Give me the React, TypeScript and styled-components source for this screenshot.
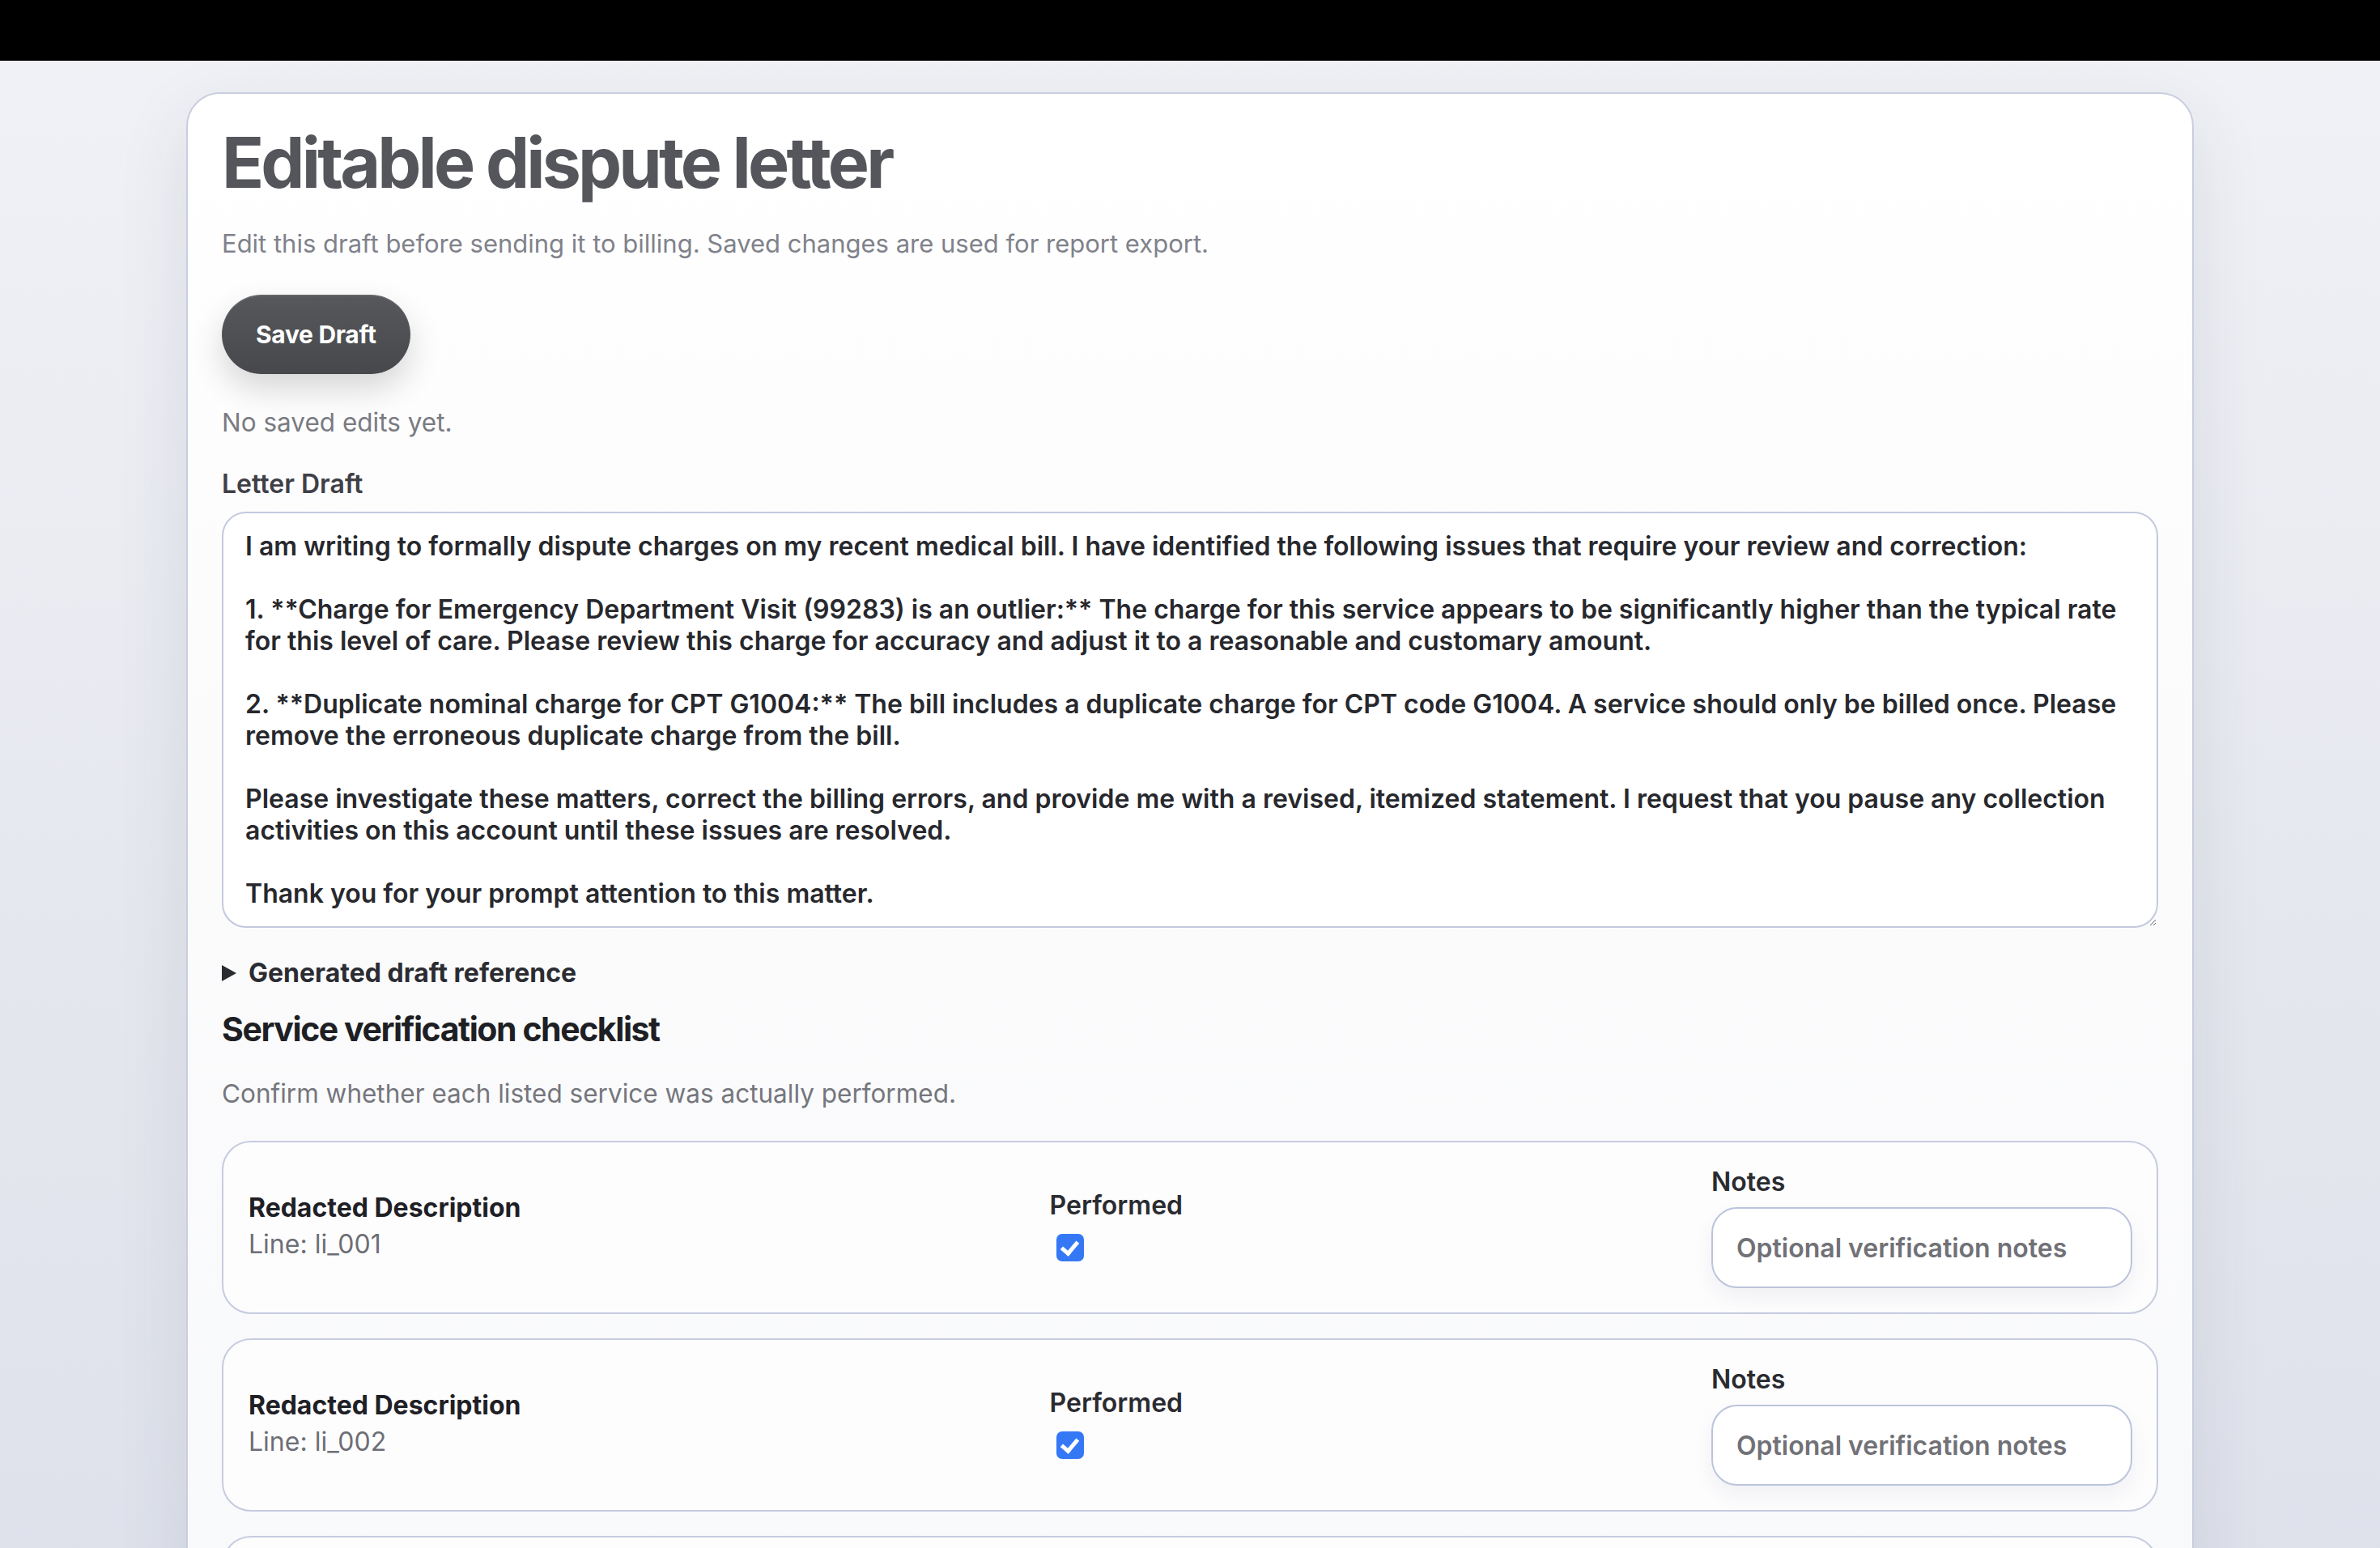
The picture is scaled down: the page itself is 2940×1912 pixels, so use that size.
import React from "react";
import styled, { createGlobalStyle } from "styled-components";

const GlobalStyle = createGlobalStyle`
  html, body {
    margin: 0;
    padding: 0;
  }
  body {
    font-family: Inter, "Noto Sans", "Liberation Sans", sans-serif;
    background: linear-gradient(180deg, #f1f2f6 0%, #e6e8ef 50%, #dcdfea 100%);
    min-height: 1912px;
  }
  * { box-sizing: border-box; }
`;

const TopBar = styled.div`
  height: 75px;
  background: #000;
`;

const Page = styled.main`
  padding: 39px 230px 0 230px;
`;

const Card = styled.section`
  display: flex;
  flex-direction: column;
  align-items: flex-start;
  padding: 42px 42px 80px;
  border: 2px solid #c9cee0;
  border-radius: 42px;
  background: linear-gradient(180deg, #ffffff 0%, #fbfbfc 45%, #f8f9fb 100%);
  box-shadow: 0 30px 90px rgba(40, 50, 80, 0.10);
`;

const Title = styled.h1`
  margin: 0;
  font-size: 86px;
  line-height: 86px;
  font-weight: 700;
  letter-spacing: -0.045em;
  color: #55565b;
`;

const Subtitle = styled.p`
  margin: 36px 0 0;
  font-size: 31px;
  line-height: 42px;
  color: #80828b;
`;

const SaveButton = styled.button`
  margin-top: 42px;
  height: 98px;
  padding: 0 42px;
  border: none;
  border-radius: 999px;
  background: linear-gradient(180deg, #57585c 0%, #47484c 100%);
  box-shadow: inset 0 2px 0 rgba(255, 255, 255, 0.08), 0 18px 40px rgba(0, 0, 0, 0.16);
  color: #ffffff;
  font-family: inherit;
  font-size: 30px;
  font-weight: 700;
  letter-spacing: -0.01em;
  cursor: pointer;
`;

const Status = styled.p`
  margin: 37px 0 0;
  font-size: 31.5px;
  line-height: 45px;
  color: #7a7b82;
`;

const FieldLabel = styled.label`
  display: block;
  margin-top: 31px;
  font-size: 32px;
  line-height: 45px;
  font-weight: 600;
  color: #3f4046;
`;

const LetterArea = styled.textarea`
  margin-top: 12px;
  width: 100%;
  height: 514px;
  padding: 21px 27px;
  border: 2px solid #c3c9de;
  border-radius: 30px;
  background: #ffffff;
  color: #27282d;
  font-family: inherit;
  font-size: 32px;
  line-height: 39px;
  font-weight: 600;
  outline: none;
`;

const Details = styled.details`
  margin-top: 33px;
`;

const Summary = styled.summary`
  display: flex;
  align-items: center;
  gap: 15px;
  list-style: none;
  font-size: 32px;
  line-height: 45px;
  font-weight: 700;
  color: #2b2c32;
  cursor: pointer;
  &::-webkit-details-marker {
    display: none;
  }
  &::before {
    content: "";
    width: 0;
    height: 0;
    border-left: 18px solid #2b2c32;
    border-top: 10px solid transparent;
    border-bottom: 10px solid transparent;
  }
`;

const SectionTitle = styled.h2`
  margin: 23px 0 0;
  font-size: 41px;
  line-height: 49px;
  font-weight: 700;
  letter-spacing: -0.035em;
  color: #1e1f24;
`;

const SectionText = styled.p`
  margin: 32px 0 0;
  font-size: 31.5px;
  line-height: 45px;
  color: #75767d;
`;

const List = styled.div`
  margin-top: 36px;
  width: 100%;
  display: flex;
  flex-direction: column;
  gap: 30px;
`;

const ItemCard = styled.div`
  display: grid;
  grid-template-columns: minmax(0, 989fr) minmax(0, 817fr) 520px;
  align-items: center;
  padding: 26px 30px 30px 31px;
  border: 2px solid #c6cbdf;
  border-radius: 36px;
  background: #fdfdfe;
`;

const Describe = styled.div`
  display: flex;
  flex-direction: column;
`;

const ItemName = styled.strong`
  font-size: 32px;
  line-height: 45px;
  font-weight: 700;
  color: #1f2025;
`;

const ItemLine = styled.span`
  font-size: 32px;
  line-height: 45px;
  color: #6d6e75;
`;

const Column = styled.div<{ $lift?: number }>`
  display: flex;
  flex-direction: column;
  align-items: flex-start;
  padding-bottom: ${(p) => p.$lift ?? 0}px;
`;

const ColumnLabel = styled.span`
  font-size: 32px;
  line-height: 45px;
  font-weight: 600;
  color: #2a2b30;
`;

const Check = styled.input.attrs({ type: "checkbox" })`
  appearance: none;
  margin: 13px 0 0 8px;
  width: 34px;
  height: 34px;
  border-radius: 7px;
  background: #3478f6;
  display: grid;
  place-items: center;
  cursor: pointer;
  &::after {
    content: "";
    width: 8px;
    height: 16px;
    margin-top: -4px;
    border: solid #ffffff;
    border-width: 0 5px 5px 0;
    transform: rotate(40deg);
  }
`;

const NotesInput = styled.input`
  margin-top: 9px;
  width: 520px;
  height: 100px;
  padding: 0 29px;
  border: 2px solid #bcc4dc;
  border-radius: 32px;
  background: #ffffff;
  box-shadow: 0 12px 26px rgba(30, 40, 70, 0.06);
  font-family: inherit;
  font-size: 32px;
  font-weight: 600;
  color: #27282d;
  outline: none;
  &::placeholder {
    color: #717177;
  }
`;

const letter = `I am writing to formally dispute charges on my recent medical bill. I have identified the following issues that require your review and correction:

1. **Charge for Emergency Department Visit (99283) is an outlier:** The charge for this service appears to be significantly higher than the typical rate for this level of care. Please review this charge for accuracy and adjust it to a reasonable and customary amount.

2. **Duplicate nominal charge for CPT G1004:** The bill includes a duplicate charge for CPT code G1004. A service should only be billed once. Please remove the erroneous duplicate charge from the bill.

Please investigate these matters, correct the billing errors, and provide me with a revised, itemized statement. I request that you pause any collection activities on this account until these issues are resolved.

Thank you for your prompt attention to this matter.`;

const items = ["li_001", "li_002", "li_003"];

export default function App() {
  return (
    <>
      <GlobalStyle />
      <TopBar />
      <Page>
        <Card>
          <Title>Editable dispute letter</Title>
          <Subtitle>
            Edit this draft before sending it to billing. Saved changes are used for report export.
          </Subtitle>
          <SaveButton>Save Draft</SaveButton>
          <Status>No saved edits yet.</Status>
          <FieldLabel htmlFor="letter">Letter Draft</FieldLabel>
          <LetterArea id="letter" defaultValue={letter} />
          <Details>
            <Summary>Generated draft reference</Summary>
          </Details>
          <SectionTitle>Service verification checklist</SectionTitle>
          <SectionText>Confirm whether each listed service was actually performed.</SectionText>
          <List>
            {items.map((id) => (
              <ItemCard key={id}>
                <Describe>
                  <ItemName>Redacted Description</ItemName>
                  <ItemLine>Line: {id}</ItemLine>
                </Describe>
                <Column $lift={4}>
                  <ColumnLabel>Performed</ColumnLabel>
                  <Check defaultChecked />
                </Column>
                <Column>
                  <ColumnLabel>Notes</ColumnLabel>
                  <NotesInput placeholder="Optional verification notes" />
                </Column>
              </ItemCard>
            ))}
          </List>
        </Card>
      </Page>
    </>
  );
}
